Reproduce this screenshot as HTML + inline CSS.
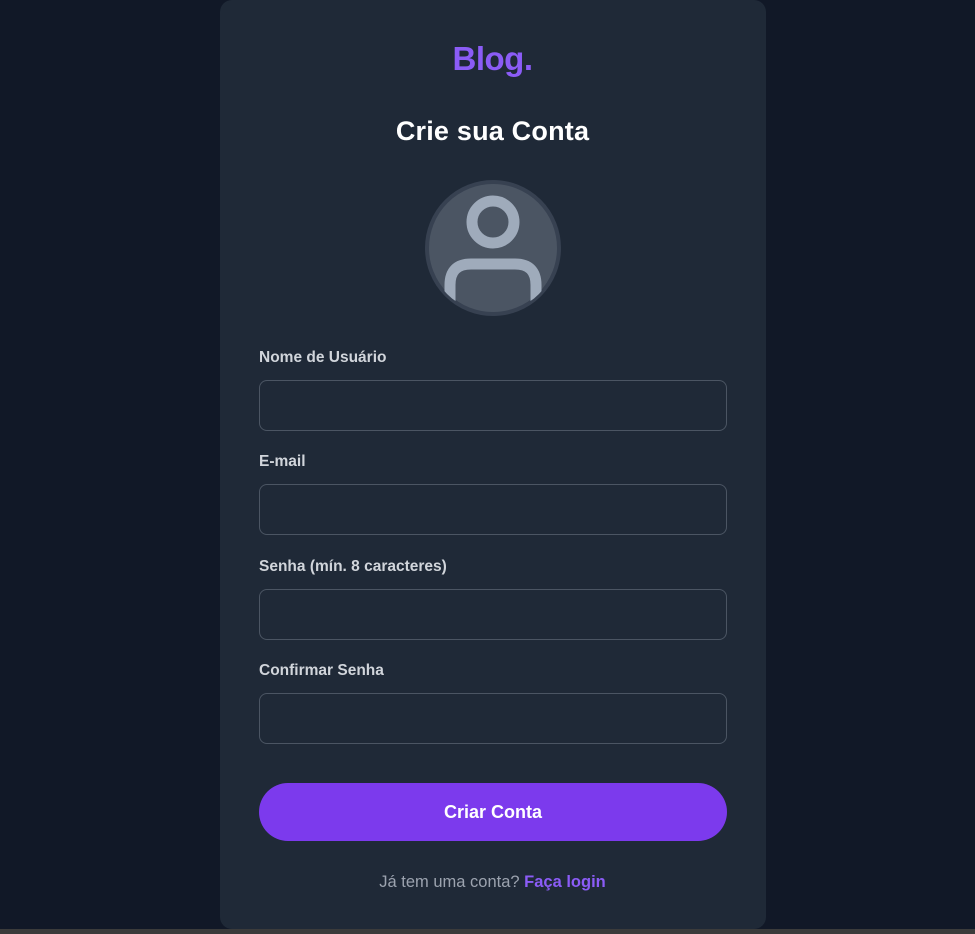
<!DOCTYPE html>
<html><head><meta charset="utf-8"><style>
*{box-sizing:border-box;margin:0;padding:0}
body{width:975px;height:934px;background:#111827;font-family:"Liberation Sans",sans-serif;position:relative;overflow:hidden}
.strip{position:absolute;left:0;top:929px;width:975px;height:5px;background:#3b3b3b}
.card{position:absolute;left:220px;top:0;width:546px;height:929px;background:#1f2937;border-radius:12px}
.abs{position:absolute}
.logo{left:0;width:985px;top:40px;text-align:center;font-size:33px;font-weight:bold;color:#8b5cf6;letter-spacing:-0.5px}
.title{left:0;width:985px;top:116px;text-align:center;font-size:27px;font-weight:bold;color:#fff;letter-spacing:0.2px}
.label{left:259px;font-size:15.5px;font-weight:bold;color:#d1d5db}
.inp{left:259px;width:468px;height:51px;border:1px solid #4b5563;border-radius:8px;background:#1f2937}
.btn{left:259px;top:783px;width:468px;height:58px;border-radius:29px;background:#7c3aed;color:#fff;font-size:18px;font-weight:bold;text-align:center;line-height:58px}
.foot{left:0;width:985px;top:873px;text-align:center;font-size:16.5px;color:#9ca3af}
.foot b{color:#8b5cf6}
</style></head><body>
<div class="card"></div>
<div class="strip"></div>
<div class="abs logo">Blog.</div>
<div class="abs title">Crie sua Conta</div>
<svg class="abs" style="left:424px;top:179px" width="138" height="138" viewBox="0 0 138 138">
<defs><clipPath id="c"><circle cx="69" cy="69" r="65"/></clipPath></defs>
<circle cx="69" cy="69" r="66" fill="#4b5563" stroke="#374151" stroke-width="4"/>
<g clip-path="url(#c)" fill="none" stroke="#9fabbb" stroke-width="11">
<circle cx="69" cy="43" r="21"/>
<path d="M26 130 V106 Q26 85 47 85 H91 Q112 85 112 106 V130"/>
</g>
</svg>
<div class="abs label" style="top:349px">Nome de Usuário</div>
<div class="abs inp" style="top:380px"></div>
<div class="abs label" style="top:453px">E-mail</div>
<div class="abs inp" style="top:484px"></div>
<div class="abs label" style="top:558px">Senha (mín. 8 caracteres)</div>
<div class="abs inp" style="top:589px"></div>
<div class="abs label" style="top:662px">Confirmar Senha</div>
<div class="abs inp" style="top:693px"></div>
<div class="abs btn">Criar Conta</div>
<div class="abs foot">Já tem uma conta? <b>Faça login</b></div>
</body></html>
